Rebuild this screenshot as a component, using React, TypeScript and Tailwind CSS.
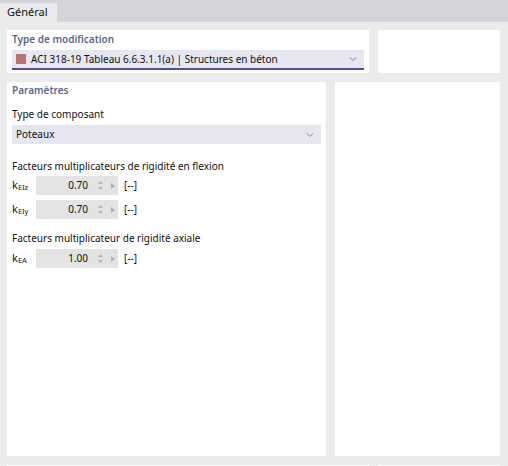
import { ChevronDown } from 'lucide-react';

const font = { fontFamily: '"Noto Sans", "Open Sans", sans-serif' };

function NumRow({ sub, value }: { sub: string; value: string }) {
  return (
    <div className="flex items-center h-[19px] mb-[5px]">
      <div className="w-[24px] text-[11px] text-[#111] leading-none">
        k<span className="text-[7.5px] align-[-1px]">{sub}</span>
      </div>
      <div className="w-[82px] h-[19px] bg-[#e3e3e3] flex items-center">
        <span className="flex-1 text-right text-[10px] text-[#111] pr-[8px]">{value}</span>
        <div className="w-[8px] flex flex-col items-center justify-center gap-[3px] mr-[7px]">
          <svg width="5" height="3" viewBox="0 0 5 3"><path d="M0 3 L2.5 0 L5 3Z" fill="#b5b5b5" /></svg>
          <svg width="5" height="3" viewBox="0 0 5 3"><path d="M0 0 L2.5 3 L5 0Z" fill="#b5b5b5" /></svg>
        </div>
        <svg width="4" height="6" viewBox="0 0 4 6" className="mr-[3px]"><path d="M0 0 L4 3 L0 6Z" fill="#b0b0b0" /></svg>
      </div>
      <span className="ml-[6px] text-[10px] text-[#111]">[--]</span>
    </div>
  );
}

export default function App() {
  return (
    <div className="w-[508px] h-[466px] bg-[#ebebeb] overflow-hidden" style={font}>
      {/* tab strip */}
      <div className="h-[22px] bg-[#d4d4da] flex items-end">
        <div className="h-[19px] w-[57px] bg-[#ebebeb] flex items-center pl-[7px] text-[11px] text-[#111]">
          Général
        </div>
      </div>

      <div className="pl-[7px] pr-[8px] pt-[8px] flex flex-col gap-[9px]">
        <div className="flex gap-[9px] h-[43px]">
          <div className="w-[362px] bg-white px-[5px]">
            <div className="text-[10px] font-semibold text-[#56698c] h-[20px] leading-[18px]">Type de modification</div>
            <div className="h-[20px] bg-[#e6e6f0] border-b-2 border-[#4f4f9e] flex items-center pl-[4px] pr-[5px]">
              <span className="w-[10px] h-[10px] bg-[#b97272] mr-[5px]" />
              <span className="flex-1 text-[10px] text-[#111]">ACI 318-19 Tableau 6.6.3.1.1(a) | Structures en béton</span>
              <ChevronDown size={12} strokeWidth={1.25} color="#555" />
            </div>
          </div>
          <div className="flex-1 bg-white" />
        </div>

        <div className="flex gap-[9px] h-[374px]">
          <div className="w-[319px] bg-white px-[5px] pt-[1px]">
            <div className="text-[10px] font-semibold text-[#56698c] h-[15px] leading-[15px]">Paramètres</div>
            <div className="mt-[8px] text-[10px] text-[#111] h-[19px] leading-[16px]">Type de composant</div>
            <div className="h-[19px] bg-[#e6e6f0] flex items-center pl-[4px] pr-[5px]">
              <span className="flex-1 text-[10px] text-[#111]">Poteaux</span>
              <ChevronDown size={12} strokeWidth={1.25} color="#555" />
            </div>
            <div className="mt-[14px] text-[10px] text-[#111] h-[16px] leading-[16px] mb-[2px]">
              Facteurs multiplicateurs de rigidité en flexion
            </div>
            <NumRow sub="EIz" value="0.70" />
            <NumRow sub="EIy" value="0.70" />
            <div className="mt-[11px] text-[10px] text-[#111] h-[16px] leading-[16px] mb-[3px]">
              Facteurs multiplicateur de rigidité axiale
            </div>
            <NumRow sub="EA" value="1.00" />
          </div>
          <div className="flex-1 bg-white" />
        </div>

        <div className="flex gap-[9px] h-[43px]">
          <div className="w-[362px] bg-white" />
          <div className="flex-1 bg-white" />
        </div>
      </div>
    </div>
  );
}
